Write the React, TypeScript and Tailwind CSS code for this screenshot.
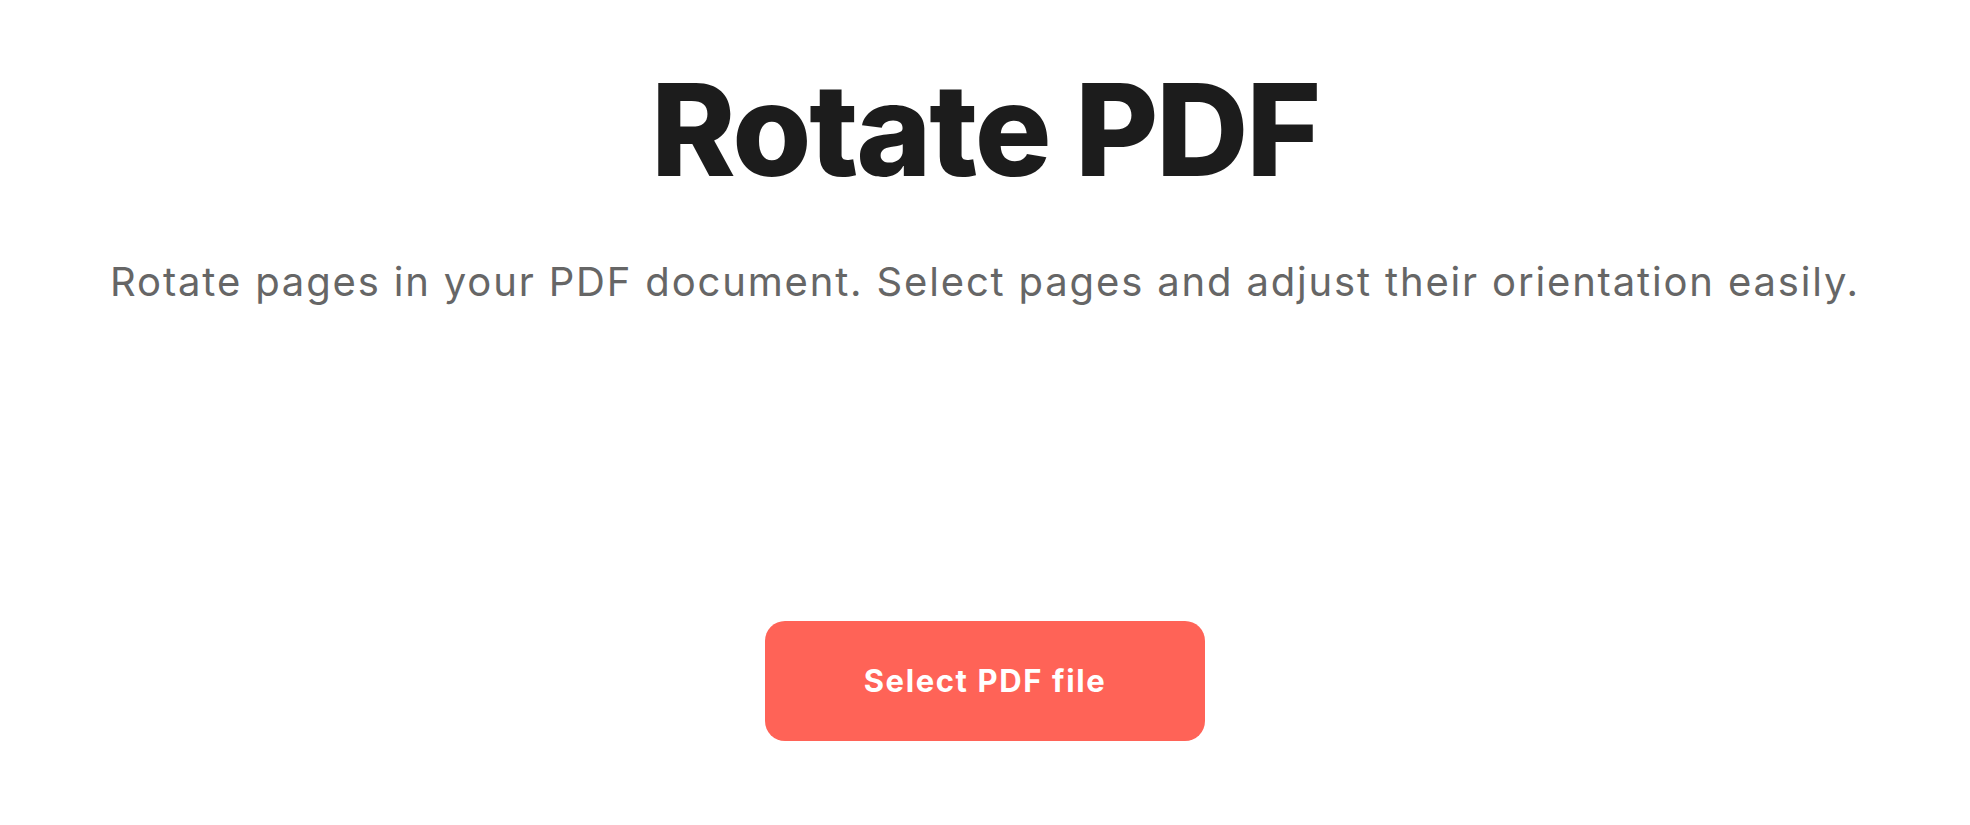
import React from 'react'

const App: React.FC = () => {
  return (
    <div
      className="min-h-screen w-full bg-white flex flex-col items-center"
      style={{ fontFamily: 'Inter, "Noto Sans", sans-serif' }}
    >
      <h1 className="mt-[66px] text-[128px] leading-[128px] font-extrabold tracking-[-0.018em] text-[#1c1c1c]">
        Rotate PDF
      </h1>
      <p className="mt-[58px] text-[40px] leading-[60px] tracking-[0.046em] text-[#666666] whitespace-nowrap">
        Rotate pages in your PDF document. Select pages and adjust their orientation easily.
      </p>
      <button className="mt-[309px] w-[440px] h-[120px] rounded-[20px] bg-[#ff6357] text-white text-[31px] font-bold tracking-[0.052em]">
        Select PDF file
      </button>
    </div>
  )
}

export default App
